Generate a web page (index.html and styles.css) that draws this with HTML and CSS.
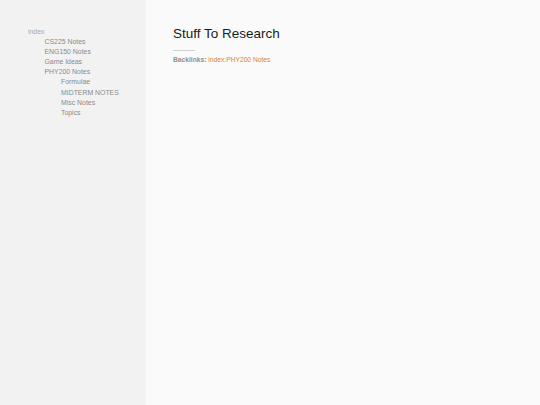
FILE: index.html
```html
<!DOCTYPE html>
<html>
<head>
<meta charset="utf-8">
<link rel="stylesheet" href="styles.css">
</head>
<body>
<div class="layout">
  <nav class="sidebar">
    <ul class="tree">
      <li><a class="root">index</a>
        <ul>
          <li><a>CS225 Notes</a></li>
          <li><a>ENG150 Notes</a></li>
          <li><a>Game Ideas</a></li>
          <li><a>PHY200 Notes</a>
            <ul>
              <li><a>Formulae</a></li>
              <li><a>MIDTERM NOTES</a></li>
              <li><a>Misc Notes</a></li>
              <li><a>Topics</a></li>
            </ul>
          </li>
        </ul>
      </li>
    </ul>
  </nav>
  <main class="content">
    <h1 class="title">Stuff To Research</h1>
    <hr class="rule">
    <p class="backlinks"><span class="label">Backlinks:</span> <a class="link">index:PHY200 Notes</a></p>
  </main>
</div>
</body>
</html>
```
FILE: styles.css
```css
html, body {
  margin: 0;
  padding: 0;
  height: 100%;
}
body {
  font-family: "Liberation Sans", Arial, sans-serif;
  background: #fafafa;
}
.layout {
  display: flex;
  min-height: 100%;
}
.sidebar {
  width: 118px;
  flex: 0 0 118px;
  background: #f2f2f2;
  padding: 27px 0 0 28px;
}
.tree, .tree ul {
  list-style: none;
  margin: 0;
  padding: 0;
}
.tree ul {
  padding-left: 16.5px;
}
.tree a {
  display: block;
  font-size: 6.9px;
  line-height: 10.1px;
  color: #8a8a8a;
}
.tree a.root {
  color: #a8a8a8;
}
.content {
  flex: 1;
  padding: 25px 0 0 27px;
}
.title {
  margin: 0;
  font-size: 13.5px;
  font-weight: normal;
  line-height: 17px;
  color: #1a1a1a;
}
.rule {
  margin: 8px 0 0 0;
  width: 22px;
  border: 0;
  border-top: 1px solid #cfcfcf;
  height: 0;
}
.backlinks {
  margin: 4px 0 0 0;
  font-size: 6.7px;
  line-height: 9px;
}
.label {
  font-weight: bold;
  color: #909090;
}
.link {
  color: #e0812f;
}
```
